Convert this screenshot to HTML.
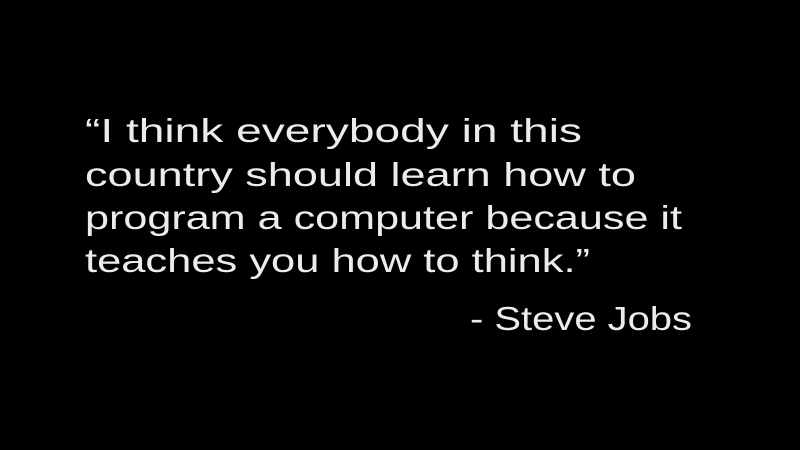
<!DOCTYPE html>
<html>
<head>
<meta charset="utf-8">
<style>
  html, body { margin:0; padding:0; background:#000; width:800px; height:450px; overflow:hidden; }
  svg { display:block; }
  text { font-family: "Liberation Sans", "DejaVu Sans", sans-serif; fill:#ececec; font-size:33px; }
</style>
</head>
<body>
<svg width="800" height="450" viewBox="0 0 800 450" xmlns="http://www.w3.org/2000/svg">
  <rect width="800" height="450" fill="#000"/>
  <text x="85" y="142" textLength="497" lengthAdjust="spacingAndGlyphs">“I think everybody in this</text>
  <text x="85" y="186" textLength="551" lengthAdjust="spacingAndGlyphs">country should learn how to</text>
  <text x="85" y="229" textLength="597" lengthAdjust="spacingAndGlyphs">program a computer because it</text>
  <text x="85" y="272" textLength="505" lengthAdjust="spacingAndGlyphs">teaches you how to think.”</text>
  <text x="470" y="330" textLength="222" lengthAdjust="spacingAndGlyphs">- Steve Jobs</text>
</svg>
</body>
</html>
